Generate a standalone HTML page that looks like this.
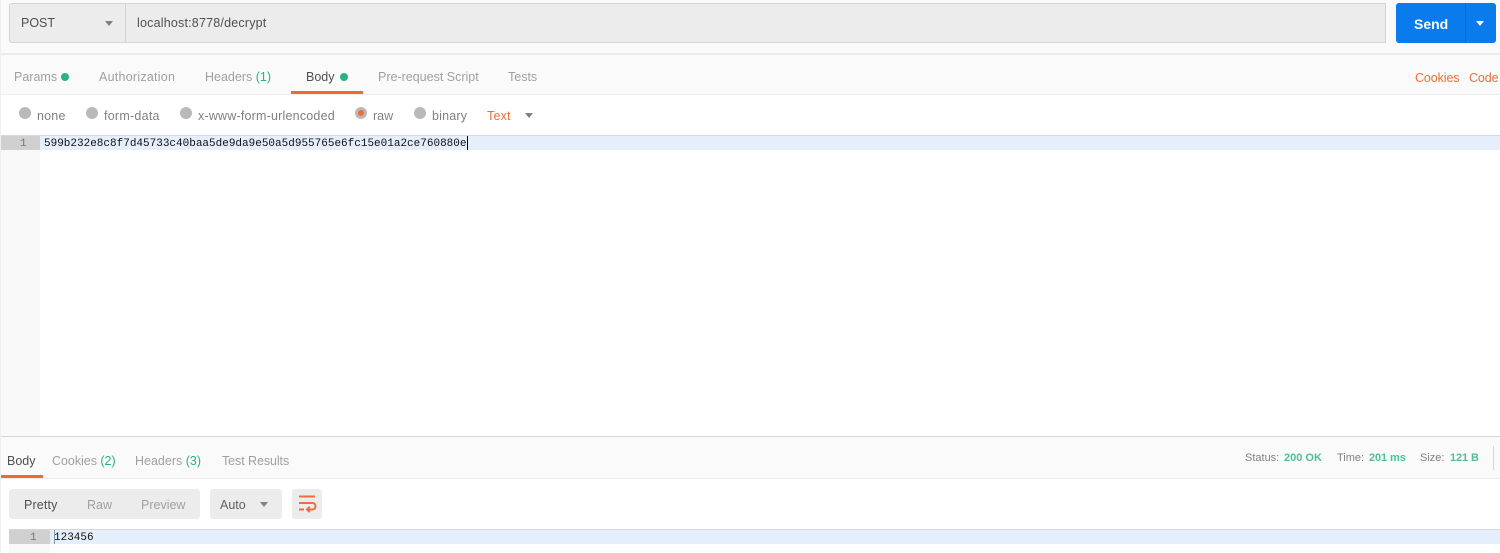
<!DOCTYPE html>
<html><head><meta charset="utf-8">
<style>
html,body{margin:0;padding:0;background:#fff;}
#p{position:relative;width:1500px;height:553px;overflow:hidden;background:#fff;font-family:"Liberation Sans",sans-serif;font-size:12.5px;color:#808080;}
#p div,#p span.a{position:absolute;}
.t{white-space:nowrap;line-height:16px;}
.g{color:#26b47f;}
.o{color:#f26b3a;}
.d{width:8px;height:8px;border-radius:50%;background:#26b47f;}
.r{width:12px;height:12px;border-radius:50%;background:#b9b9b9;}
.m{font-family:"Liberation Mono",monospace;font-size:11px;color:#111;white-space:pre;line-height:15px;}
</style></head><body>
<div id="p">
<div style="left:0;top:0;width:1500px;height:53px;background:#fafafa"></div>
<div style="left:0;top:53px;width:1500px;height:2px;background:#ececec"></div>
<div style="left:0;top:55px;width:1500px;height:39px;background:#fafafa"></div>
<div style="left:0;top:94px;width:1500px;height:1px;background:#ececec"></div>

<div style="left:9px;top:3px;width:1375px;height:38px;background:#ececec;border:1px solid #d4d4d4;border-radius:3px 0 0 3px"></div>
<div style="left:125px;top:4px;width:1px;height:38px;background:#d4d4d4"></div>
<div class="t" style="left:21px;top:15px;color:#505050;font-size:12.5px">POST</div>
<svg style="position:absolute;left:105px;top:21px" width="9" height="6"><path d="M0 0H8L4 5Z" fill="#808080"/></svg>
<div class="t" style="left:137px;top:15px;color:#505050;letter-spacing:.2px">localhost:8778/decrypt</div>

<div style="left:1396px;top:3px;width:100px;height:40px;background:#097bed;border-radius:3px"></div>
<div style="left:1465px;top:3px;width:1px;height:40px;background:#0a6cd0"></div>
<div class="t" style="left:1414px;top:16px;color:#fff;font-weight:bold;font-size:14px">Send</div>
<svg style="position:absolute;left:1476px;top:21px" width="9" height="6"><path d="M0 0H8L4 5Z" fill="#fff"/></svg>

<div class="t" style="left:14px;top:69px;color:#a0a0a0">Params</div>
<div class="d" style="left:61px;top:73px"></div>
<div class="t" style="left:99px;top:69px;color:#a0a0a0;letter-spacing:.25px">Authorization</div>
<div class="t" style="left:205px;top:69px;color:#a0a0a0">Headers <span class="g">(1)</span></div>
<div class="t" style="left:306px;top:69px;color:#505050">Body</div>
<div class="d" style="left:340px;top:73px"></div>
<div style="left:291px;top:91px;width:72px;height:3px;background:#ee6a3b"></div>
<div class="t" style="left:378px;top:69px;color:#a0a0a0">Pre-request Script</div>
<div class="t" style="left:508px;top:69px;color:#a0a0a0">Tests</div>
<div class="t o" style="left:1415px;top:70px;letter-spacing:-.1px">Cookies</div>
<div class="t o" style="left:1469px;top:70px;letter-spacing:-.1px">Code</div>

<div class="r" style="left:19px;top:107px"></div>
<div class="t" style="left:37px;top:108px;letter-spacing:.2px">none</div>
<div class="r" style="left:86px;top:107px"></div>
<div class="t" style="left:104px;top:108px;letter-spacing:.25px">form-data</div>
<div class="r" style="left:180px;top:107px"></div>
<div class="t" style="left:198px;top:108px;letter-spacing:.2px">x-www-form-urlencoded</div>
<div class="r" style="left:355px;top:107px"></div>
<div style="left:358px;top:110px;width:6px;height:6px;border-radius:50%;background:#f26b3a"></div>
<div class="t" style="left:373px;top:108px">raw</div>
<div class="r" style="left:414px;top:107px"></div>
<div class="t" style="left:432px;top:108px;letter-spacing:.2px">binary</div>
<div class="t o" style="left:487px;top:108px;letter-spacing:.2px">Text</div>
<svg style="position:absolute;left:525px;top:113px" width="9" height="6"><path d="M0 0H8L4 5Z" fill="#808080"/></svg>

<div style="left:0;top:135px;width:1500px;height:1px;background:#d4d8dc"></div>
<div style="left:0;top:136px;width:40px;height:300px;background:#f9f9f9"></div>
<div style="left:0;top:136px;width:40px;height:14px;background:#d0d0d0"></div>
<div style="left:40px;top:136px;width:1460px;height:14px;background:#e5effb"></div>
<div class="m" style="left:20px;top:137px;color:#777">1</div>
<div class="m" style="left:44px;top:137px">599b232e8c8f7d45733c40baa5de9da9e50a5d955765e6fc15e01a2ce760880e</div>
<div style="left:467px;top:136px;width:1px;height:14px;background:#000"></div>

<div style="left:0;top:436px;width:1500px;height:1px;background:#d6d6d6"></div>
<div style="left:0;top:437px;width:1500px;height:41px;background:#fafafa"></div>
<div style="left:0;top:478px;width:1500px;height:1px;background:#ececec"></div>
<div class="t" style="left:7px;top:453px;color:#505050">Body</div>
<div style="left:0;top:475px;width:43px;height:3px;background:#ee6a3b"></div>
<div class="t" style="left:52px;top:453px;color:#a0a0a0;letter-spacing:-.03px">Cookies <span class="g">(2)</span></div>
<div class="t" style="left:135px;top:453px;color:#a0a0a0">Headers <span class="g">(3)</span></div>
<div class="t" style="left:222px;top:453px;color:#a0a0a0;letter-spacing:-.08px">Test Results</div>

<div class="t" style="left:1245px;top:450px;font-size:11px">Status:</div>
<div class="t g" style="left:1284px;top:450px;font-size:11px;font-weight:bold;color:#4fbf95">200 OK</div>
<div class="t" style="left:1337px;top:450px;font-size:11px">Time:</div>
<div class="t g" style="left:1369px;top:450px;font-size:11px;font-weight:bold;color:#4fbf95;letter-spacing:-.1px">201 ms</div>
<div class="t" style="left:1420px;top:450px;font-size:11px">Size:</div>
<div class="t g" style="left:1450px;top:450px;font-size:11px;font-weight:bold;color:#4fbf95;letter-spacing:-.1px">121 B</div>
<div style="left:1493px;top:446px;width:1px;height:24px;background:#d8d8d8"></div>

<div style="left:9px;top:489px;width:191px;height:30px;background:#ececec;border-radius:3px"></div>
<div class="t" style="left:24px;top:497px;color:#505050;letter-spacing:.15px">Pretty</div>
<div class="t" style="left:87px;top:497px;color:#a0a0a0">Raw</div>
<div class="t" style="left:141px;top:497px;color:#a0a0a0">Preview</div>
<div style="left:210px;top:489px;width:72px;height:30px;background:#ececec;border-radius:3px"></div>
<div class="t" style="left:220px;top:497px;color:#606060">Auto</div>
<svg style="position:absolute;left:260px;top:502px" width="9" height="6"><path d="M0 0H8L4 5Z" fill="#808080"/></svg>
<div style="left:292px;top:489px;width:30px;height:30px;background:#ececec;border-radius:3px"></div>
<svg style="position:absolute;left:292px;top:489px" width="30" height="30" fill="none" stroke="#f26b3a" stroke-width="2"><path d="M7 7.500H23M7 14H20.500C24.500 14 24.500 20.500 20.500 20.500H15M17.800 17.800L15 20.500L17.800 23.200M7 20.500H12"/></svg>

<div style="left:9px;top:529px;width:1491px;height:1px;background:#d4d8dc"></div>
<div style="left:9px;top:530px;width:41px;height:23px;background:#f9f9f9"></div>
<div style="left:9px;top:530px;width:41px;height:14px;background:#d0d0d0"></div>
<div style="left:50px;top:530px;width:1450px;height:14px;background:#e5effb"></div>
<div class="m" style="left:30px;top:531px;color:#777">1</div>
<div class="m" style="left:54px;top:531px">123456</div>
<div style="left:54px;top:530px;width:1px;height:14px;background:#8a9bb0"></div>
<div style="left:0;top:0;width:1px;height:553px;background:#efefef"></div>
</div>
</body></html>
